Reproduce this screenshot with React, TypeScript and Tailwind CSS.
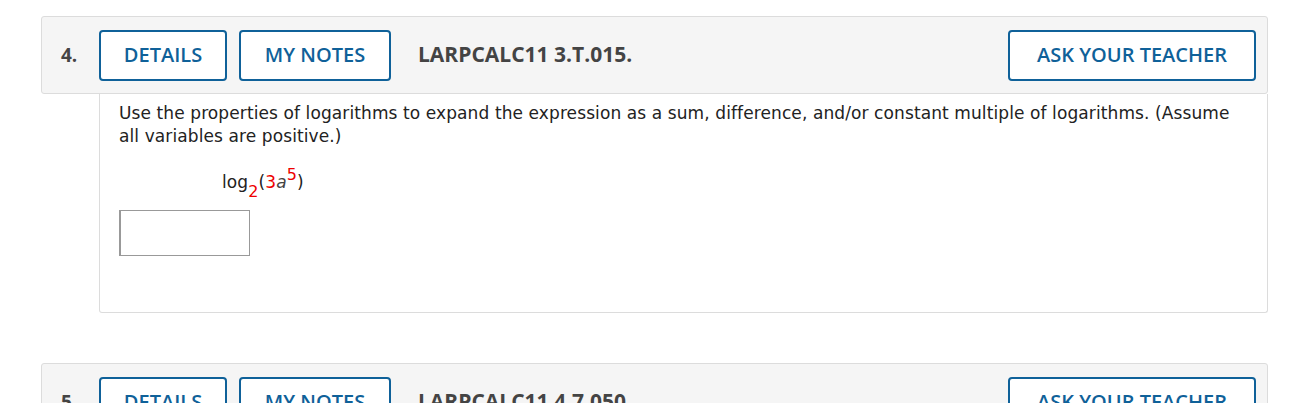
function QuestionHeader({ num, code }: { num: string; code: string }) {
  return (
    <div className="flex h-[78px] items-center rounded-[3px] border border-[#dcdcdc] bg-[#f5f5f5] pl-[19px] pr-[11px] font-[family-name:Open_Sans,sans-serif]">
      <span className="w-[38px] text-[19px] font-bold text-[#444]">{num}</span>
      <button className="h-[51px] w-[128px] rounded-[4px] border-2 border-[#0f6199] bg-white text-[20px] font-semibold text-[#0f6199]">
        DETAILS
      </button>
      <button className="ml-[12px] h-[51px] w-[152px] rounded-[4px] border-2 border-[#0f6199] bg-white text-[20px] font-semibold text-[#0f6199]">
        MY NOTES
      </button>
      <span className="ml-[27px] text-[21px] font-bold text-[#444]">{code}</span>
      <button className="ml-auto h-[51px] w-[248px] rounded-[4px] border-2 border-[#0f6199] bg-white text-[20px] font-semibold text-[#0f6199]">
        ASK YOUR TEACHER
      </button>
    </div>
  );
}

export default function App() {
  return (
    <div className="min-h-screen bg-white pl-[41px] pr-[22px] pt-[16px]">
      <QuestionHeader num="4." code="LARPCALC11 3.T.015." />
      <div className="ml-[58px] h-[219px] rounded-b-[3px] border border-t-0 border-[#dcdcdc] bg-white pl-[19px] pr-[16px] pt-[8px] font-[family-name:DejaVu_Sans,Verdana,sans-serif] text-[17px] leading-[23px] tracking-[0.1px] text-[#222]">
        <p>
          Use the properties of logarithms to expand the expression as a sum, difference, and/or constant multiple of
          logarithms. (Assume all variables are positive.)
        </p>
        <div className="ml-[103px] mt-[23px]">
          log<sub className="bottom-[-0.55em] text-[16px] text-[#e00]">2</sub>(<span className="text-[#e00]">3</span>
          <i className="text-[#444]">a</i>
          <sup className="text-[16px] text-[#e00]">5</sup>)
        </div>
        <div className="mt-[16px] h-[46px] w-[131px] border border-l-2 border-[#999] bg-white" />
      </div>
      <div className="mt-[50px]">
        <QuestionHeader num="5." code="LARPCALC11 4.7.050." />
      </div>
    </div>
  );
}
